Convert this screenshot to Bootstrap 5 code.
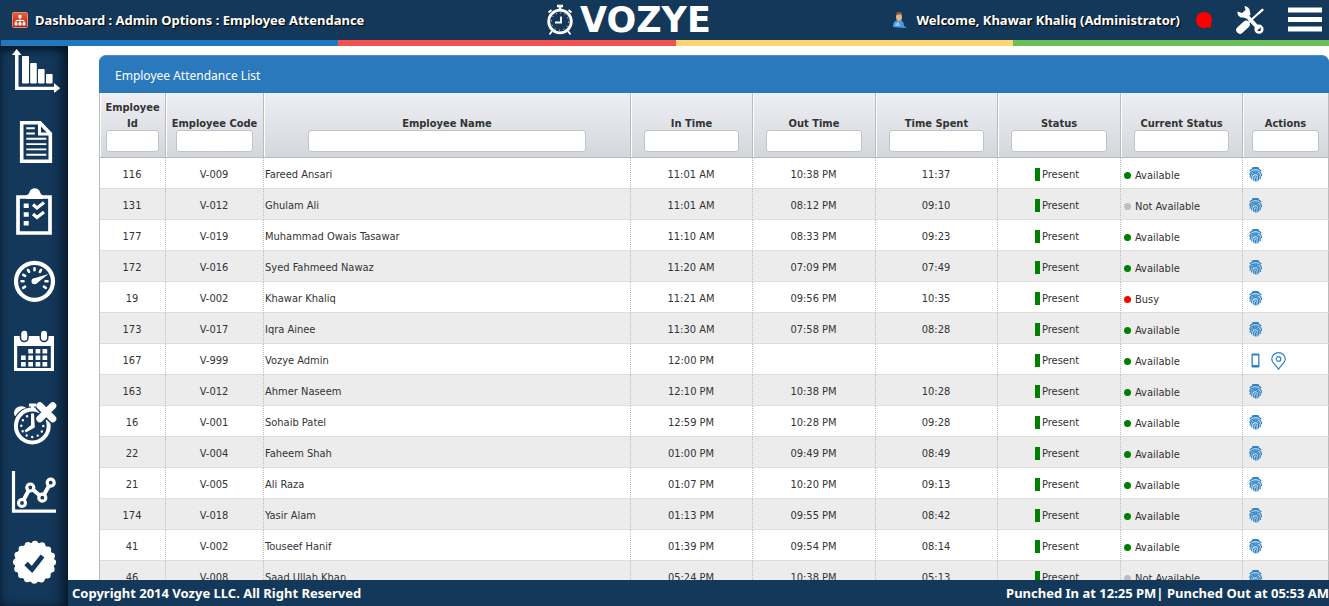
<!DOCTYPE html>
<html lang="en">
<head>
<meta charset="utf-8">
<meta name="viewport" content="width=device-width, initial-scale=1">
<title>Employee Attendance</title>
<link href="https://cdn.jsdelivr.net/npm/bootstrap@5.3.0/dist/css/bootstrap.min.css" rel="stylesheet">
<style>
:root { --navy: #14385a; --blue: #2a79bd; }
body { font-family: "DejaVu Sans Condensed", "DejaVu Sans", sans-serif; font-size: 11px; line-height: 16px; color: #333; background: #fff; }
.topbar { height: 40px; background: var(--navy); color: #fff; font: bold 13px/18px "Noto Sans", sans-serif; padding: 0 7px 0 12px; text-shadow: 1px 1px 1px #000; }
.topbar button { color: #fff; }
.topbar svg, .sidebar svg, .acts svg { display: block; }
.crumbs { gap: 7px; }
.crumbs a { color: inherit; text-decoration: none; }
.brandmark { gap: 6px; color: #fff; text-shadow: none; }
.wordmark { font: bold 35px/38px "DejaVu Sans", sans-serif; }
.stripe { height: 6px; padding-left: 1px; background: var(--navy); }
.stripe span { flex: 0 0 25.4%; }
.sidebar { width: 68px; background: var(--navy); gap: 20px; padding-left: 9px; color: #fff; box-shadow: inset -8px 0 14px -4px #04121f, inset 5px 0 9px -4px #0a2238, inset 0 8px 10px -6px #04121f; }
.sidebar a { color: #fff; }
.panel { margin: 9px 0 0 31px; }
.panel-title { height: 38px; background: var(--blue); color: #fff; font: 12px/40px "Noto Sans", sans-serif; padding-left: 16px; border-radius: 7px 7px 0 0; margin: 0; border-top: 1px solid #4a90cc; }
.att { table-layout: fixed; width: 100%; border-collapse: separate; border-spacing: 0; border-left: 1px solid #bbb; }
.att th { height: 65px; padding: 0 4px 5px; vertical-align: bottom; text-align: center; background: linear-gradient(#eeeff4, #d3d7dc); border-right: 1px solid #bbb; border-bottom: 1px solid #bbb; box-shadow: inset 1px 0 #fff; }
.att th label { display: block; }
.att th input { display: block; width: calc(75% + 10px); height: 22px; margin: -2px auto 0; padding: 0 4px; border: 1px solid #bfc2c6; border-radius: 3px; background: #fff; }
.att td { height: 31px; padding: 3px 1px 0 0; text-align: center; border-right: 1px dotted #bbb; border-bottom: 1px solid #dedede; white-space: nowrap; }
.att td:last-child { border-right: 1px solid #bbb; }
.att tbody tr:nth-child(even) { background: #ececec; }
.att td.who { text-align: left; padding-left: 1px; }
.present { padding-right: 3px; }
.flag { width: 5px; height: 13px; background: #008000; margin-right: 2px; }
.state { gap: 4px; padding: 2px 0 0 3px; }
.dot { width: 7px; height: 7px; border-radius: 50%; background: #008000; }
.dot.off { background: #bebebe; }
.dot.busy { background: #f00; }
.acts { gap: 8px; padding-left: 6px; color: #2b82c6; }
.acts a { color: inherit; }
.statusbar { height: 26px; background: var(--navy); color: #fff; font: bold 13px/26px "Noto Sans", sans-serif; padding-left: 4px; }
</style>
</head>
<body>
<div class="vh-100 d-flex flex-column overflow-hidden">
  <header class="topbar d-flex align-items-center justify-content-between flex-shrink-0">
    <div class="crumbs d-flex align-items-center">
      <svg width="16" height="16" viewBox="0 0 16 16"><defs><linearGradient id="rg" x2="0" y2="1"><stop stop-color="#e8603c"/><stop offset="1" stop-color="#b01c10"/></linearGradient></defs><rect x=".5" y=".5" width="15" height="15" rx="1" fill="url(#rg)" stroke="#e98a6c"/><path d="M8 5v6M4 11V8.500h8V11" fill="none" stroke="#fff"/><path d="M6.500 3h3v3h-3zM2.500 10.500h3v3h-3zM6.500 10.500h3v3h-3zM10.500 10.500h3v3h-3z" fill="#fff"/></svg>
      <a href="#">Dashboard : Admin Options : Employee Attendance</a>
    </div>
    <div class="brandmark d-flex align-items-center">
      <svg width="28" height="32" viewBox="0 0 28 32" fill="none" stroke="#fff"><circle cx="14" cy="17.500" r="11.300" stroke-width="2.800"/><circle cx="14" cy="17.500" r="8.600" stroke-width="1" stroke-dasharray="1 3.500"/><path d="M14 1.500v5M11 2h6" stroke-width="2.600"/><path d="M15 12.500V18.500H9M6 27l-2.500 3.500M22 27l2.500 3.500M2.500 8.500L5.500 6M25.500 8.500l-3-2.500" stroke-width="1.800"/></svg>
      <span class="wordmark">VOZYE</span>
    </div>
    <div class="d-flex align-items-center">
      <svg class="me-2" width="16" height="18" viewBox="0 0 16 18"><path d="M1 16c0-5 2-7 6-7s5 3 5 6l3 1.500-3 .5z" fill="#4a97e4"/><path d="M3 15c0-3 2-4 4-4l1 4z" fill="#8cc4f8"/><ellipse cx="7" cy="6" rx="3" ry="4" fill="#e2b48a"/><path d="M4 4.500C3.800 2 5 1 7 1s3.400 1 3.200 3.500C9 3 6 3 4 4.500z" fill="#8a6142"/></svg>
      <span>Welcome, Khawar Khaliq (Administrator)</span>
      <button class="btn p-0 border-0 ms-3" aria-label="Presence"><svg width="16" height="16" viewBox="0 0 16 16" fill="red"><circle cx="8" cy="8" r="8"/><path d="M13 10h2v5.500h-4z"/></svg></button>
      <button class="btn p-0 border-0 ms-4" aria-label="Tools"><svg width="28" height="28" viewBox="0 0 28 28"><path d="M9 8l14 15" stroke="#fff" stroke-width="4"/><path d="M8.500 0L9.500 4 6 7 1.500 5.500C1 9.500 4 12 7.500 11.500l3 1 4-4-.5-2.500C14 3 12 .5 8.500 0z" fill="#fff"/><circle cx="23" cy="23.200" r="3.300" fill="none" stroke="#fff" stroke-width="2.600"/><path d="M26.500 3.500L12 17" stroke="#fff" stroke-width="2"/><path d="M26.500 2.500l1.500 1.500-5 4.500-1.500-1.500z" fill="#fff"/><path d="M4 24l6-5.500" stroke="#fff" stroke-width="7.500" stroke-linecap="round"/></svg></button>
      <button class="btn p-0 border-0 ms-4" aria-label="Menu"><svg width="34" height="26" viewBox="0 0 34 26"><path d="M0 3h34M0 12.500h34M0 22h34" stroke="#fff" stroke-width="5"/></svg></button>
    </div>
  </header>
  <div class="stripe d-flex overflow-hidden flex-shrink-0">
    <span style="background:#2178be"></span><span style="background:#f25252"></span><span style="background:#ffd574"></span><span style="background:#6bbf59"></span>
  </div>
  <div class="d-flex flex-grow-1 overflow-hidden">
    <nav class="sidebar d-flex flex-column flex-shrink-0 overflow-hidden" aria-label="Main">
      <a href="#" aria-label="Reports"><svg width="52" height="50" viewBox="0 0 52 50" fill="currentColor"><path d="M6 9H3L7.700 3l4.800 6H9.500v31.700H45V37l6.200 5.300L45 47v-3H6z"/><rect x="13" y="10" width="7" height="27.500" rx="1"/><rect x="21.200" y="17" width="6.600" height="20.500" rx="1"/><rect x="29" y="23" width="6.600" height="14.500" rx="1"/><rect x="37" y="28" width="6.600" height="9.500" rx="1"/></svg></a>
      <a href="#" aria-label="Documents"><svg width="50" height="50" viewBox="0 0 50 50" fill="none" stroke="currentColor"><path d="M12.700 6.700H31l10.300 11V45.300H12.700z" stroke-width="3.600"/><path d="M30.500 6v12H42" stroke-width="3"/><path d="M17.300 12.300h8.500M17.300 17.500h8.500M17.300 22.800h20M17.300 28.100h20M17.300 33.400h20M17.300 38.700h20" stroke-width="1.900"/></svg></a>
      <a href="#" aria-label="Tasks"><svg width="50" height="50" viewBox="0 0 50 50" fill="none" stroke="currentColor"><path d="M9 11h32v36H9z" stroke-width="3.700"/><path d="M17 9.500c2-1 3-1.500 3.500-3.500 1.500-5 9-5 10.500 0 .5 2 1.500 2.500 3 3.500V13H17z" fill="currentColor" stroke="none"/><path d="M14.700 17.500h5v4.500h-5zM14.700 26.300h5v4.500h-5zM14.700 35h5v4.500h-5z" fill="currentColor" stroke="none"/><path d="M24 18.500l4 3.500 7-5.500M24 28l4 3.500 7-5.500" stroke-width="3.200"/></svg></a>
      <a href="#" aria-label="Dashboard"><svg width="50" height="50" viewBox="0 0 50 50" fill="none" stroke="currentColor"><circle cx="25.500" cy="25.300" r="18.500" stroke-width="4.200"/><path d="M14.200 31.800l1.900-1.100M12.500 25.300h2M14.200 18.800l1.900 1.100M19 14l1.100 1.900M25.500 12.300v2M32 14l-1.100 1.900M36.500 25.300h2M36.800 31.800l-1.900-1.100" stroke-width="2.600" stroke-linecap="round"/><path d="M24.500 22.500L39.500 18 27.500 27.500z" fill="currentColor" stroke="none"/><circle cx="25.500" cy="25.300" r="3" fill="currentColor" stroke="none"/></svg></a>
      <a href="#" aria-label="Calendar"><svg width="50" height="50" viewBox="0 0 50 50" fill="currentColor"><path fill-rule="evenodd" d="M5 10h40v35H5zM8.200 20v22h33.600V20z"/><g stroke="#14385a" stroke-width="1.500"><rect x="11.500" y="4" width="7.500" height="11.500" rx="3.700"/><rect x="31.300" y="4" width="7.500" height="11.500" rx="3.700"/></g><path d="M19.300 23H24v4.500h-4.700zM26.600 23h4.700v4.500h-4.700zM33.500 23h4.700v4.500h-4.700zM12 29.500h4.700V34H12zM19.300 29.500H24V34h-4.700zM26.600 29.500h4.700V34h-4.700zM33.500 29.500h4.700V34h-4.700zM12 36h4.700v4.500H12zM19.300 36H24v4.500h-4.700zM26.600 36h4.700v4.500h-4.700zM33.500 36h4.700v4.500h-4.700z"/></svg></a>
      <a href="#" aria-label="Late arrivals"><svg width="50" height="50" viewBox="0 0 50 50" fill="none" stroke="currentColor"><circle cx="23.300" cy="30" r="16.400" stroke-width="4"/><circle cx="23.300" cy="30" r="11" stroke-width="2.400" stroke-linecap="round" stroke-dasharray="0 5.760"/><path d="M22 17.500h3l.8 14-9 5-1.300-2L22 29z" fill="currentColor" stroke="none"/><path d="M5.500 19.500c-2-6 3.500-11.500 10.500-8.500L17 12c-5 1-8 4-10.500 8zM20 7.500h7v3h-2v3h-3v-3h-2z" fill="currentColor" stroke="none"/><path d="M30 9l15 15M45 9L30 24" stroke="#14385a" stroke-width="10"/><path d="M30.800 9.800l13 13M43.800 9.800l-13 13" stroke-width="7" stroke-linecap="round"/></svg></a>
      <a href="#" aria-label="Trends"><svg width="50" height="50" viewBox="0 0 50 50" fill="none" stroke="currentColor"><path d="M4.500 5v40.200H47" stroke-width="3.200"/><path d="M13 37l8.300-15.700 12 10.400 8.400-15" stroke-width="4"/><g fill="#14385a" stroke-width="3.200"><circle cx="13" cy="37" r="3.500"/><circle cx="21.300" cy="21.500" r="3.500"/><circle cx="33.300" cy="31.700" r="3.500"/><circle cx="41.700" cy="16.700" r="3.500"/></g></svg></a>
      <a href="#" aria-label="Approvals"><svg width="50" height="50" viewBox="0 0 50 50"><circle cx="25.500" cy="26.300" r="19.800" fill="currentColor"/><circle cx="25.500" cy="26.300" r="18.300" fill="none" stroke="currentColor" stroke-width="6.500" stroke-linecap="round" stroke-dasharray="0 7.186"/><path d="M17 27.500l6 6L33.500 20" fill="none" stroke="#14385a" stroke-width="4.800"/></svg></a>
    </nav>
    <div class="d-flex flex-column flex-grow-1 overflow-hidden">
      <main class="flex-grow-1 overflow-hidden">
        <section class="panel">
          <h1 class="panel-title">Employee Attendance List</h1>
          <table class="att">
            <colgroup><col style="width:66px"><col style="width:98px"><col><col style="width:122px"><col style="width:123px"><col style="width:122px"><col style="width:123px"><col style="width:122px"><col style="width:86px"></colgroup>
            <thead><tr id="heads"></tr></thead>
            <tbody id="rows"></tbody>
          </table>
        </section>
      </main>
      <footer class="statusbar d-flex align-items-center justify-content-between flex-shrink-0">
        <span>Copyright 2014 Vozye LLC. All Right Reserved</span>
        <span>Punched In at 12:25 PM| Punched Out at 05:53 AM</span>
      </footer>
    </div>
  </div>
</div>
<svg class="d-none">
  <symbol id="finger" viewBox="0 0 13 15"><g fill="none" stroke="currentColor" stroke-width="1.200"><path d="M3 1.400C5 .3 8 .3 10 1.400M.8 4.200c2.500-3.500 8.900-3.500 11.400 0M.6 7.800c.6-5.300 11.200-5.300 11.800 0v1.500M1 10.800c0-7.500 10.300-7.500 10.300 0v1.200M2.800 12.500V10c0-4.600 6.800-4.600 6.800 0v3.500M4.700 13.800V10.500c0-2.300 3.300-2.300 3.300 0v4M6.400 10.500v4"/></g></symbol>
  <symbol id="phone" viewBox="0 0 13 15"><path fill-rule="evenodd" fill="currentColor" d="M3.500.5h6a1 1 0 0 1 1 1v12a1 1 0 0 1-1 1h-6a1 1 0 0 1-1-1v-12a1 1 0 0 1 1-1zM3.800 2.500v9.500h5.400V2.500z"/></symbol>
  <symbol id="pin" viewBox="0 0 15 18"><g fill="none" stroke="currentColor" stroke-width="1.200"><path d="M7.500 17.200C5 13.500.8 10.500.8 7a6.700 6.300 0 0 1 13.400 0c0 3.500-4.200 6.500-6.700 10.200z"/><circle cx="7.500" cy="7" r="2.300"/></g></symbol>
</svg>
<script src="https://cdn.jsdelivr.net/npm/bootstrap@5.3.0/dist/js/bootstrap.bundle.min.js"></script>
<script>
const heads = ['Employee Id', 'Employee Code', 'Employee Name', 'In Time', 'Out Time', 'Time Spent', 'Status', 'Current Status', 'Actions'];
document.getElementById('heads').innerHTML = heads.map((h, i) =>
  `<th scope="col"><label for="f${i}">${h}</label><input id="f${i}" type="text"></th>`).join('');
const data = [
  [116, 'V-009', 'Fareed Ansari', '11:01 AM', '10:38 PM', '11:37', 'Available'],
  [131, 'V-012', 'Ghulam Ali', '11:01 AM', '08:12 PM', '09:10', 'Not Available'],
  [177, 'V-019', 'Muhammad Owais Tasawar', '11:10 AM', '08:33 PM', '09:23', 'Available'],
  [172, 'V-016', 'Syed Fahmeed Nawaz', '11:20 AM', '07:09 PM', '07:49', 'Available'],
  [19, 'V-002', 'Khawar Khaliq', '11:21 AM', '09:56 PM', '10:35', 'Busy'],
  [173, 'V-017', 'Iqra Ainee', '11:30 AM', '07:58 PM', '08:28', 'Available'],
  [167, 'V-999', 'Vozye Admin', '12:00 PM', '', '', 'Available'],
  [163, 'V-012', 'Ahmer Naseem', '12:10 PM', '10:38 PM', '10:28', 'Available'],
  [16, 'V-001', 'Sohaib Patel', '12:59 PM', '10:28 PM', '09:28', 'Available'],
  [22, 'V-004', 'Faheem Shah', '01:00 PM', '09:49 PM', '08:49', 'Available'],
  [21, 'V-005', 'Ali Raza', '01:07 PM', '10:20 PM', '09:13', 'Available'],
  [174, 'V-018', 'Yasir Alam', '01:13 PM', '09:55 PM', '08:42', 'Available'],
  [41, 'V-002', 'Touseef Hanif', '01:39 PM', '09:54 PM', '08:14', 'Available'],
  [46, 'V-008', 'Saad Ullah Khan', '05:24 PM', '10:38 PM', '05:13', 'Not Available']
];
const dots = { 'Available': '', 'Not Available': 'off', 'Busy': 'busy' };
const icon = (id, label, w, h) => `<a href="#" aria-label="${label}"><svg width="${w}" height="${h}"><use href="#${id}"/></svg></a>`;
document.getElementById('rows').innerHTML = data.map(([id, code, name, tin, tout, spent, state]) => `<tr>
  <td>${id}</td><td>${code}</td><td class="who">${name}</td><td>${tin}</td><td>${tout}</td><td>${spent}</td>
  <td><div class="present d-flex align-items-center justify-content-center"><span class="flag"></span>Present</div></td>
  <td><div class="state d-flex align-items-center"><span class="dot ${dots[state]}"></span>${state}</div></td>
  <td><div class="acts d-flex align-items-center">${tout ? icon('finger', 'Fingerprint', 13, 15) : icon('phone', 'Mobile', 13, 15) + icon('pin', 'Location', 17, 18)}</div></td></tr>`).join('');
</script>
</body>
</html>
